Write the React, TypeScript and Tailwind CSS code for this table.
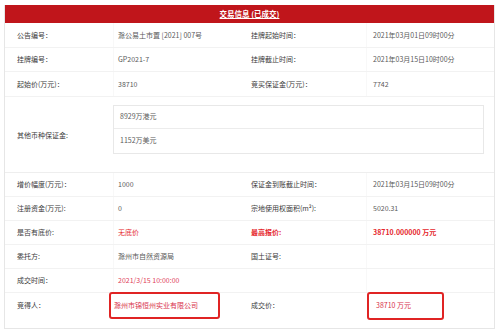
import React from "react";

const font = { fontFamily: '"Noto Sans CJK SC", "Noto Sans", sans-serif' };

type Cell = { text?: string; cls?: string };

function Row({ a, b, c, d, h = "h-[24.5px]" }: { a: Cell; b: Cell; c: Cell; d: Cell; h?: string }) {
  return (
    <div className={`grid grid-cols-[108px_128px_125px_1fr] items-center border-b border-[#f2f2f2] ${h}`}>
      <div className={`pl-[12px] text-[7px] text-[#3a3a3a] ${a.cls ?? ""}`}>{a.text}</div>
      <div className={`pl-[4px] h-full flex items-center border-l border-[#f8f8f8] text-[7px] text-[#5a5a5a] ${b.cls ?? ""}`}>{b.text}</div>
      <div className={`pl-[10px] text-[7px] text-[#3a3a3a] ${c.cls ?? ""}`}>{c.text}</div>
      <div className={`pl-[6px] h-full flex items-center border-l border-[#f8f8f8] text-[7px] text-[#5a5a5a] ${d.cls ?? ""}`}>{d.text}</div>
    </div>
  );
}

export default function App() {
  return (
    <div className="w-[499px] h-[334px] bg-white pt-[5px] pl-[4px]" style={font}>
      <div className="w-[491px] h-[324px] border border-t-0 border-[#e6e6e6] bg-white flex flex-col">
        <div className="h-[18px] bg-[#c0151b] flex items-center justify-center">
          <span className="text-white text-[7.5px] font-bold underline underline-offset-1">交易信息 (已成交)</span>
        </div>
        <Row
          a={{ text: "公告编号：" }}
          b={{ text: "滁公易土市置 [2021] 007号" }}
          c={{ text: "挂牌起始时间：" }}
          d={{ text: "2021年03月01日09时00分" }}
        />
        <Row
          a={{ text: "挂牌编号：" }}
          b={{ text: "GP2021-7" }}
          c={{ text: "挂牌截止时间：" }}
          d={{ text: "2021年03月15日10时00分" }}
        />
        <Row
          a={{ text: "起始价(万元)：" }}
          b={{ text: "38710" }}
          c={{ text: "竞买保证金(万元)：" }}
          d={{ text: "7742" }}
        />
        <div className="h-[76.5px] flex border-b border-[#eeeeee]">
          <div className="w-[108px] pl-[12px] flex items-center text-[7px] text-[#3a3a3a] pt-[1px]">其他币种保证金:</div>
          <div className="pt-[8px]">
            <div className="w-[371px] border border-[#e8e8e8] flex flex-col">
              <div className="h-[23px] pl-[6px] flex items-center text-[7px] text-[#5a5a5a] border-b border-[#ececec]">8929万港元</div>
              <div className="h-[24px] pl-[6px] flex items-center text-[7px] text-[#5a5a5a]">1152万美元</div>
            </div>
          </div>
        </div>
        <Row
          h="h-[24px]"
          a={{ text: "增价幅度(万元)：" }}
          b={{ text: "1000" }}
          c={{ text: "保证金到账截止时间：" }}
          d={{ text: "2021年03月15日09时00分" }}
        />
        <Row
          h="h-[24px]"
          a={{ text: "注册资金(万元):" }}
          b={{ text: "0" }}
          c={{ text: "宗地使用权面积(m²):" }}
          d={{ text: "5020.31" }}
        />
        <Row
          h="h-[24px]"
          a={{ text: "是否有底价:" }}
          b={{ text: "无底价", cls: "!text-[#e5262c]" }}
          c={{ text: "最高报价:", cls: "!text-[#e5262c] font-bold" }}
          d={{ text: "38710.000000 万元", cls: "!text-[#e5262c] font-bold" }}
        />
        <Row
          h="h-[24px]"
          a={{ text: "委托方:" }}
          b={{ text: "滁州市自然资源局" }}
          c={{ text: "国土证号:" }}
          d={{ text: "" }}
        />
        <Row
          h="h-[24px]"
          a={{ text: "成交时间：" }}
          b={{ text: "2021/3/15 10:00:00", cls: "!text-[#e0405a]" }}
          c={{ text: "" }}
          d={{ text: "" }}
        />
        <div className="flex-1 grid grid-cols-[108px_128px_125px_1fr] items-start">
          <div className="h-[27px] -mt-[1px] pl-[12px] flex items-center text-[7px] text-[#3a3a3a]">竞得人：</div>
          <div className="h-[27px] -mt-[1px] -ml-[4px] flex items-center">
            <div className="h-[27px] w-[111px] border-2 border-[#e02424] rounded-[3px] pl-[3px] flex items-center text-[7px] text-[#d8304a] whitespace-nowrap">
              滁州市锦恒州实业有限公司
            </div>
          </div>
          <div className="h-[27px] -mt-[1px] pl-[10px] flex items-center text-[7px] text-[#3a3a3a]">成交价：</div>
          <div className="h-[27px] -mt-[1px] pl-[1px] flex items-center">
            <div className="h-[28px] w-[77px] border-2 border-[#e02424] rounded-[3px] pl-[7px] flex items-center text-[7px] text-[#d8304a] whitespace-nowrap">
              38710 万元
            </div>
          </div>
        </div>
      </div>
    </div>
  );
}
